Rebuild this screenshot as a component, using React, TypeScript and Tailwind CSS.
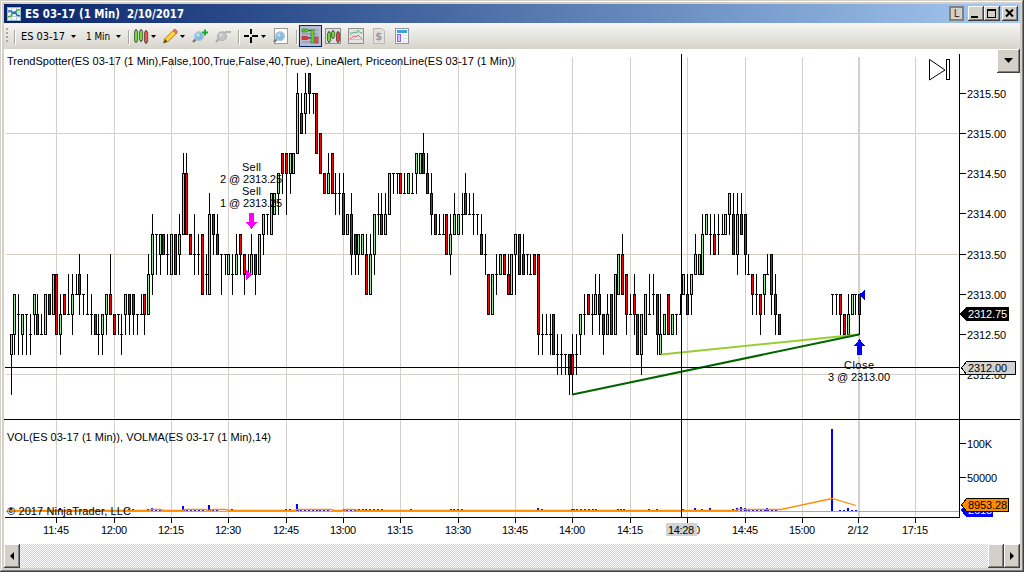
import React from "react";

type Bar = [index: number, high: number, top: number, bottom: number, low: number, kind: string];

// Each entry: high, body top, body bottom, low (quarter-point steps below 2315.75), g = up, r = down, d = unchanged
const SESSION = `13 13 14 16 g|11 11 13 14 g|11 12 12 14 d|12 12 13 14 g|12 12 12 14 d|12 13 13 14 d|11 11 12 13 g|11 12 13 13 r|12 13 13 13 d|11 11 13 13 g|11 11 12 12 r|10 10 12 12 g|10 10 13 13 r|11 12 13 14 g|11 11 12 12 r|10 12 12 12 d|10 11 12 13 g|10 11 11 11 d|9 10 11 12 r|11 11 11 12 d|10 12 12 12 d|11 12 12 13 d|12 12 13 13 r|12 13 13 14 d|12 12 13 14 g|11 11 12 13 g|9 11 12 12 r|12 12 13 13 r|12 12 12 13 d|12 13 13 14 d|11 11 12 13 g|11 11 12 13 r|11 11 12 13 r|12 12 12 13 d|11 12 12 12 d|11 11 12 13 r|9 10 12 12 g|7 8 10 11 g|8 8 8 10 d|8 8 9 10 g|8 8 9 9 r|8 9 9 10 d|8 8 10 10 g|8 8 10 10 r|7 8 9 10 g|4 5 8 8 g|4 5 8 8 r|8 8 9 9 r|7 9 9 10 d|8 9 9 10 d|8 8 11 11 r|9 10 10 11 d|6 7 11 11 g|7 7 8 9 r|7 8 9 9 r|9 9 9 11 d|9 9 9 10 d|9 9 10 10 g|9 10 10 11 d|8 9 10 10 g|8 8 9 10 r|9 9 10 11 r|9 10 10 10 d|8 9 10 10 g|9 9 10 11 r|8 8 10 10 g|7 7 8 9 g|7 7 7 8 d|6 6 8 8 g|6 6 7 7 g|5 5 6 7 g|4 4 5 6 r|4 4 5 7 r|4 4 5 6 g|4 4 5 5 g|0 1 4 4 g|1 2 3 3 r|0 1 2 3 g|0 0 1 2 r|1 1 1 2 d|1 1 4 4 r|3 3 5 5 r|5 5 6 6 r|4 5 6 6 g|4 4 6 6 r|5 6 6 7 d|5 6 6 7 d|5 6 8 8 r|7 7 8 8 g|6 7 9 10 r|8 8 9 10 r|8 8 9 10 g|8 8 9 9 g|8 9 11 11 r|8 9 11 11 g|7 7 9 10 g|6 7 7 8 d|6 7 8 8 r|6 7 8 8 g|5 5 7 7 g|5 5 5 6 d|5 5 5 6 d|5 5 6 6 r|5 6 6 6 d|5 5 6 6 g|5 6 6 6 d|4 4 5 6 g|4 4 5 5 g|3 4 5 5 r|4 5 6 6 r|5 6 7 8 r|7 7 8 8 r|7 8 8 8 d|7 8 8 8 d|7 7 9 9 r|7 8 9 10 g|6 7 8 8 g|7 7 8 8 g|6 7 7 8 d|5 6 7 7 r|6 7 7 7 d|6 7 7 8 d|7 7 7 8 d|7 8 9 9 r|8 9 9 10 d|10 10 12 12 r|10 10 12 12 g|9 10 10 11 d|9 9 10 10 g|9 9 10 10 r|9 10 11 11 r|9 9 11 11 g|8 8 9 11 g|8 8 10 10 r|8 9 10 10 r|9 9 9 10 d|9 10 10 10 d|9 9 10 10 r|9 9 13 14 r|12 13 13 14 d|12 13 13 13 d|12 13 13 14 d|12 12 14 14 r|13 14 14 15 d|13 14 14 15 d|14 14 14 15 d|14 14 15 16 r|13 14 15 16 r|13 14 14 15 d|12 12 13 14 g|11 12 12 13 d|11 11 12 12 r|11 12 12 13 d|10 11 12 12 g|10 11 12 13 r|12 12 13 14 r|11 12 13 13 g|11 11 13 13 r|10 10 13 13 g|9 9 11 11 g|8 9 11 11 r|10 10 12 13 r|11 12 12 12 d|10 11 12 13 r|12 12 14 14 r|12 12 14 15 g|11 11 13 13 g|10 12 12 12 d|10 11 11 12 d|11 11 13 14 r|11 13 14 14 g|12 12 13 13 g|11 11 13 13 r|12 12 13 13 g|12 12 12 13 d|11 12 12 12 d|10 10 11 11 g|10 11 12 12 r|10 10 11 12 g|8 9 10 10 g|9 9 10 10 g|7 8 10 10 g|7 7 8 8 g|7 8 8 9 d|7 8 9 9 r|7 8 8 9 d|7 8 8 8 d|7 7 8 8 g|6 6 7 8 g|6 7 9 9 r|6 7 9 10 g|6 7 8 8 r|7 7 9 10 r|9 10 10 10 d|10 10 11 12 r|10 11 11 12 d|11 11 12 13 r|10 10 11 12 g|9 10 10 10 d|9 9 11 12 r|10 11 12 13 r|12 12 13 13 r`;
const REOPEN = `11 11 11 12 d|11 11 11 12 d|11 11 12 13 r|12 12 13 13 r|11 12 13 13 g|11 11 12 12 g|11 11 11 12 d|11 11 12 13 r`;

function parse(data: string, first: number): Bar[] {
  return data.split("|").map((row, i) => {
    const [h, t, b, l, k] = row.split(" ");
    return [first + i, +h, +t, +b, +l, k];
  });
}
const BARS = [...parse(SESSION, 0), ...parse(REOPEN, 215)];

const LEVELS = [73, 93, 113, 133, 153, 173, 193, 214, 234, 254, 274, 294, 314, 334, 354, 374, 394];
const barX = (i: number) => Math.floor(11.08 + 3.8225 * i);

const TIMES: [number, string][] = [
  [56, "11:45"], [114, "12:00"], [171, "12:15"], [228, "12:30"], [286, "12:45"], [343, "13:00"],
  [400, "13:15"], [458, "13:30"], [515, "13:45"], [572, "14:00"], [630, "14:15"], [687, "14:30"],
  [745, "14:45"], [802, "15:00"], [858, "2/12"], [915, "17:15"],
];
const PRICES: [number, string][] = [
  [93, "2315.50"], [133, "2315.00"], [173, "2314.50"], [213, "2314.00"], [254, "2313.50"],
  [294, "2313.00"], [334, "2312.50"], [374, "2312.00"], [443, "100K"], [477, "50000"],
];
const SPIKES: [number, number][] = [
  [11, 3], [60, 3], [152, 3], [183, 5], [209, 6], [297, 7], [129, 2], [133, 2], [148, 2], [156, 2], [160, 2],
  [232, 2], [286, 2], [290, 2], [538, 3], [542, 2], [572, 2], [618, 2], [649, 2], [657, 2], [683, 2], [695, 3],
  [702, 2], [710, 3], [733, 2], [737, 3], [741, 4], [745, 3], [767, 3], [848, 3], [840, 1], [844, 1], [852, 1], [856, 1],
];
const DOTS: [number, number][] = [[18, 10], [45, 5], [183, 208], [209, 222], [297, 335], [343, 386], [410, 416], [450, 468], [573, 600], [620, 628], [745, 782]];

function T({ x, y, w, children, anchor, fill }: { x: number; y: number; w: number; children: string; anchor?: "middle"; fill?: string }) {
  return (
    <text x={x} y={y} textLength={w} textAnchor={anchor ?? "start"} fill={fill ?? "#000"} fontSize="11">
      {children}
    </text>
  );
}

function Candle({ bar }: { bar: Bar }) {
  const [i, h, t, b, l, k] = bar;
  const x = barX(i);
  const [yh, yt, yb, yl] = [LEVELS[h], LEVELS[t], LEVELS[b], LEVELS[l]];
  return (
    <g>
      <rect x={x} y={yh} width={1} height={yl - yh + 1} />
      <rect x={x - 1} y={yt} width={3} height={yb - yt + 1} />
      {k !== "d" && <rect x={x} y={yt + 1} width={1} height={yb - yt - 1} fill={k === "g" ? "#90ee90" : "#ff0000"} />}
    </g>
  );
}

function Chart() {
  return (
    <svg width="1016" height="495" viewBox="4 49 1016 495" className="block bg-white" fontFamily="'Liberation Sans', Arial, sans-serif" shapeRendering="crispEdges">
      <g fill="#d4d0c8">
        {TIMES.map(([x, s]) => <rect key={s} x={x} y={57} width={s === "2/12" ? 2 : 1} height={460} />)}
        {[133, 254, 374].map((y) => <rect key={y} x={6} y={y} width={953} height={1} />)}
      </g>
      {BARS.map((bar) => <Candle key={bar[0]} bar={bar} />)}

      <g fill="none" strokeWidth="2" shapeRendering="auto">
        <path d="M661 354.5 859 334.5" stroke="#9acd32" />
        <path d="M572.5 394.5 859 334.5" stroke="#006400" />
      </g>

      <rect x={6} y={511} width={953} height={1} fill="#a9a9a9" />
      <g fill="#0000ff">
        {DOTS.map(([a, b]) => Array.from({ length: Math.max(0, Math.floor((b - a) / 3.82)) }, (_, n) => (
          <rect key={`${a}-${n}`} x={Math.floor(a + n * 3.8225)} y={509} width={2} height={2} />
        )))}
        {SPIKES.map(([x, h]) => <rect key={x} x={x - 1} y={511 - h} width={2} height={h} />)}
        <rect x={831} y={429} width={2} height={82} />
      </g>
      <path shapeRendering="auto" d="M10 510.5H148L152 509.5H160L164 510.5H182L186 509.5H205L209 510.5 213 509.5H225L230 510.5H294L298 509.5H330L335 510.5H343L347 509.5H354L358 510.5H735L739 509.5H781L832 498.5 856 505.5" fill="none" stroke="#ff8c00" strokeWidth="1.3" />

      <rect x={5} y={367} width={955} height={1} />
      <rect x={681} y={54} width={1} height={463} />
      <rect x={4} y={419} width={1016} height={1} />
      <rect x={5} y={517} width={955} height={1} />
      <rect x={959} y={54} width={1} height={464} />
      {TIMES.map(([x]) => <rect key={x} x={x} y={518} width={1} height={5} />)}
      {PRICES.map(([y]) => <rect key={y} x={960} y={y} width={6} height={1} />)}

      {PRICES.map(([y, s]) => <T key={y} x={967} y={y + 5} w={s.length === 7 ? 39 : s.length === 5 ? 30 : 25}>{s}</T>)}
      {TIMES.map(([x, s]) => <T key={x} x={x} y={534} w={s === "2/12" ? 21 : 26} anchor="middle">{s}</T>)}

      <T x={7} y={65} w={508}>TrendSpotter(ES 03-17 (1 Min),False,100,True,False,40,True), LineAlert, PriceonLine(ES 03-17 (1 Min))</T>
      <T x={7} y={441} w={264}>VOL(ES 03-17 (1 Min)), VOLMA(ES 03-17 (1 Min),14)</T>
      <T x={7} y={515} w={124}>© 2017 NinjaTrader, LLC</T>

      <T x={242} y={171} w={19}>Sell</T>
      <T x={220} y={183} w={62}>2 @ 2313.25</T>
      <T x={242} y={195} w={19}>Sell</T>
      <T x={220} y={207} w={62}>1 @ 2313.25</T>
      <T x={844} y={369} w={30}>Close</T>
      <T x={828} y={381} w={62}>3 @ 2313.00</T>
      <path d="M249 213H254V222H257L251.5 229 246 222H249Z" fill="#ff00ff" />
      <path d="M246 270 252 274.5 246 280Z" fill="#ff00ff" />
      <path d="M857 355H862V346H865L859.5 339 854 346H857Z" fill="#0000ff" />
      <path d="M865 290 859 294.5 865 300Z" fill="#0000ff" />

      <path d="M960 314 966 307H1009V321H966Z" />
      <T x={968} y={318} w={39} fill="#fff">2312.75</T>
      <path d="M961.5 368 966.5 361.5H1015.5V374.5H966.5Z" fill="#d3d3d3" stroke="#000" />
      <T x={968} y={372} w={39}>2312.00</T>
      <path d="M961 510 966 504H993V517H966Z" fill="#0000ff" />
      <T x={968} y={514} w={24} fill="#fff">2618</T>
      <path d="M961.5 505 966.5 498.5H1008.5V511.5H966.5Z" fill="#ff8c00" stroke="#000" />
      <T x={968} y={509} w={39}>8953.28</T>

      <rect x={666} y={523} width={31} height={13} fill="#d3d3d3" />
      <T x={668} y={534} w={26}>14:28</T>

      <g fill="#fff" stroke="#000" shapeRendering="auto">
        <path d="M929.5 59.5V80L945 70Z" />
        <rect x={946.5} y={59.5} width={3} height={20} />
      </g>
    </svg>
  );
}

const RAISED = "bg-[#d4d0c8] shadow-[inset_-1px_-1px_0_#404040,inset_1px_1px_0_#ffffff,inset_-2px_-2px_0_#808080]";

function Caption({ children, className }: { children: React.ReactNode; className?: string }) {
  return (
    <div className={`h-[15px] w-4 shrink-0 ${RAISED} ${className ?? ""}`}>
      <svg width="16" height="15" viewBox="0 0 16 15" className="block" shapeRendering="crispEdges">{children}</svg>
    </div>
  );
}

function TitleBar() {
  return (
    <div className="flex h-[19px] shrink-0 items-center bg-linear-to-r from-[#0a246a] to-[#a6caf0] pr-0.5 pl-[3px]">
      <svg width="14" height="14" viewBox="0 0 14 14" className="shrink-0">
        <rect x=".5" y=".5" width="13" height="13" fill="#eef4f8" stroke="#9bb4c8" />
        <path d="M4.5 1V13M9.5 1V13M1 5.5H13M1 9.5H13" stroke="#b9cbd8" />
        <path d="M1 10 4 9 6 6 9 5 10 3 13 3" fill="none" stroke="#48aa45" strokeWidth="1.5" />
        <path d="M1 4 4 4 6 6 8 5 10 8 13 9" fill="none" stroke="#2370b8" strokeWidth="1.5" />
      </svg>
      <svg width="170" height="19" className="ml-1 shrink-0 overflow-visible" fontFamily="'DejaVu Sans Condensed','DejaVu Sans',sans-serif">
        <text x="0" y="14" textLength="159" lengthAdjust="spacingAndGlyphs" fill="#fff" fontSize="11.5" fontWeight="bold" xmlSpace="preserve">ES 03-17 (1 Min)&#160; 2/10/2017</text>
      </svg>
      <div className="flex-1" />
      <div className="mr-[4px] flex h-[15px] w-[15px] items-center justify-center border-2 border-[#808080] bg-[#d4d0c8] font-['DejaVu_Sans_Condensed',sans-serif] text-[11px] leading-none text-[#303030]">L</div>
      <Caption><path d="M3 10H10V12H3Z" /></Caption>
      <Caption><path d="M3 3H12V12H3ZM4 5V11H11V5Z" fillRule="evenodd" /></Caption>
      <Caption className="ml-0.5"><path d="M4 3.5 11 10.5M11 3.5 4 10.5" stroke="#000" strokeWidth="2" shapeRendering="auto" /></Caption>
    </div>
  );
}

const Drop = ({ x }: { x: number }) => <path d={`M${x} 12h5l-2.5 3z`} fill="#000" />;

function Lens({ x, gray }: { x: number; gray?: boolean }) {
  return (
    <g transform={`translate(${x} 5)`}>
      <path d="M1 14 4 11" stroke={gray ? "#aaa" : "#777"} strokeWidth="2.4" />
      <circle cx="7" cy="8.3" r="4.3" fill={gray ? "#c3c3c3" : "#82b9e1"} stroke={gray ? "#b5b5b5" : "#a9c5d8"} strokeWidth="1.4" />
      <circle cx="6" cy="7" r="1.7" fill={gray ? "#dadada" : "#c5e2f5"} />
    </g>
  );
}

function MiniCandle({ x, y, h, c }: { x: number; y: number; h: number; c: string }) {
  return (
    <g>
      <path d={`M${x + 2} ${y - 1}v${h + 2}`} stroke="#222" />
      <rect x={x + 0.5} y={y + 0.5} width="3.2" height={h - 1} rx="1" fill={c} stroke="#333" strokeWidth=".7" />
    </g>
  );
}

function Toolbar() {
  return (
    <div className="h-[26px] shrink-0 bg-linear-to-b from-[#f7f6f4] to-[#d7d4cb]">
      <svg width="1016" height="26" viewBox="4 0 1016 26" className="block" fontFamily="'DejaVu Sans Condensed','DejaVu Sans',sans-serif" fontSize="11">
        <g fill="#aaa69e">{[5, 9, 13, 17].map((y) => <rect key={y} x={6} y={y} width={2} height={2} />)}</g>
        <path d="M14.5 7V21M128.5 7V21M238.5 7V21M296.5 7V21" stroke="#aaa69e" />
        <path d="M15.5 8V22M129.5 8V22M239.5 8V22M297.5 8V22" stroke="#fff" />
        <text x="21" y="17" textLength="44" lengthAdjust="spacingAndGlyphs">ES 03-17</text>
        <text x="86" y="17" textLength="24" lengthAdjust="spacingAndGlyphs">1 Min</text>
        <Drop x={71} /><Drop x={116} /><Drop x={151} /><Drop x={180} /><Drop x={261} />
        <MiniCandle x={134} y={7} h={12} c="#6cd936" />
        <MiniCandle x={139} y={7} h={11} c="#6cd936" />
        <MiniCandle x={144} y={8} h={12} c="#f4504a" />
        <path d="M163.5 20 165 15.5 173 7.5 176.5 10.5 168 18.5Z" fill="#ffd338" stroke="#a87814" strokeWidth=".9" />
        <path d="M173 7.5 175 6 177.5 8.5 176.5 10.5Z" fill="#f47867" stroke="#b44b3e" strokeWidth=".7" />
        <path d="M163.5 20 165 16 167.5 18.5Z" fill="#5c4a28" />
        <Lens x={192} />
        <path d="M202 9.5H208M205 6.5V12.5" stroke="#16ab2c" strokeWidth="2" />
        <Lens x={215} gray />
        <path d="M225 9H231" stroke="#b5b5b5" strokeWidth="2" />
        <path d="M244 13H249M252 13H258M251 6V11M251 14V20" stroke="#000" strokeWidth="1.8" shapeRendering="crispEdges" />
        <rect x="274.5" y="5.5" width="13" height="15" fill="#fff" stroke="#9a9a9a" />
        <Lens x={273} />
        <rect x="299.5" y="2.5" width="22" height="21" fill="#b6bdd2" stroke="#0a246a" />
        <path d="M302 7H318M302 11H318M302 15H318M302 19H318" stroke="#858da0" />
        <path d="M302 6H307L309 7.5 307 9H302Z" fill="#58c928" stroke="#287812" strokeWidth=".6" />
        <path d="M302 13.5H307L309 15 307 16.5H302Z" fill="#ed3838" stroke="#8a1919" strokeWidth=".6" />
        <path d="M309 15H312M309 7.5H312" stroke="#333" />
        <rect x="311" y="7" width="3" height="13" fill="#62d62c" stroke="#267511" strokeWidth=".6" />
        <rect x="315" y="14" width="3" height="6" fill="#ed5a5a" stroke="#8a1919" strokeWidth=".6" />
        <rect x="325.5" y="5.5" width="15" height="15" fill="#dedede" stroke="#8e8e8e" />
        <MiniCandle x={327} y={9} h={10} c="#6cd936" />
        <MiniCandle x={331} y={8} h={7} c="#6cd936" />
        <MiniCandle x={336} y={9} h={10} c="#f4403a" />
        <rect x="348.5" y="5.5" width="15" height="15" fill="#e4e4e4" stroke="#8e8e8e" />
        <path d="M349 9.5H363M349 16.5H363" stroke="#c4c4c4" />
        <path d="M350 12 354 9 356 10 358 7 362 11" fill="none" stroke="#54b985" />
        <path d="M350 16 354 13 356 14 358 12 362 16" fill="none" stroke="#f05a5a" />
        <path d="M373.5 5.5H382L384.5 8V20.5H373.5Z" fill="#e2e1de" stroke="#bbb8b1" />
        <text x="375.2" y="17" fill="#999" fontWeight="bold" fontSize="11">$</text>
        <rect x="395.5" y="5.5" width="13" height="15" fill="#f5f7fa" stroke="#8d98a5" />
        <rect x="397" y="7" width="10" height="3" fill="#42a1df" />
        <rect x="397.5" y="11.5" width="3" height="7" fill="#d6c2ff" stroke="#8c63ef" />
        <path d="M403 12.5H407M403 15.5H407M403 18.5H407" stroke="#dfe3e9" />
      </svg>
    </div>
  );
}

function ScrollBar() {
  return (
    <div className="flex h-6 shrink-0 bg-[repeating-conic-gradient(#d4d0c8_0_25%,#ffffff_0_50%)] bg-[length:2px_2px]">
      <div className={`flex w-4 items-center justify-center ${RAISED}`}>
        <svg width="4" height="8" viewBox="0 0 4 8"><path d="M4 0V8L0 4Z" /></svg>
      </div>
      <div className="flex-1" />
      <div className={`w-4 ${RAISED}`} />
      <div className={`flex w-4 items-center justify-center ${RAISED}`}>
        <svg width="4" height="8" viewBox="0 0 4 8"><path d="M0 0V8L4 4Z" /></svg>
      </div>
    </div>
  );
}

export default function App() {
  return (
    <div className="flex h-[572px] w-[1024px] flex-col overflow-hidden bg-[#d4d0c8] p-1 shadow-[inset_-1px_-1px_0_#404040,inset_1px_1px_0_#d4d0c8,inset_-2px_-2px_0_#808080,inset_2px_2px_0_#ffffff]">
      <TitleBar />
      <Toolbar />
      <div className="relative h-[495px] shrink-0">
        <Chart />
        <button className={`absolute top-0 right-0 flex h-6 w-[23px] items-center justify-center ${RAISED}`} aria-label="Chart menu">
          <svg width="9" height="5" viewBox="0 0 9 5" className="-mt-0.5"><path d="M0 0H9L4.5 5Z" /></svg>
        </button>
      </div>
      <ScrollBar />
    </div>
  );
}
